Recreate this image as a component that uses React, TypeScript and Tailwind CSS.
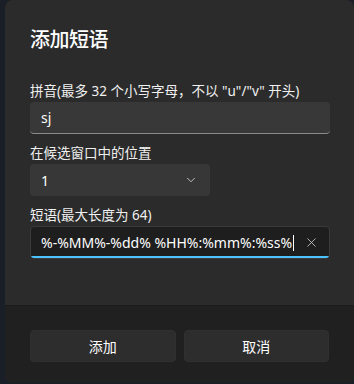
import { X, ChevronDown } from "lucide-react";

// Add-phrase dialog, dark theme. The dialog sits on a dark desk and
// bleeds past the right edge of the window by a couple of pixels.

const font = {
  fontFamily: '"Noto Sans", "Noto Sans CJK SC", sans-serif',
};

export default function App() {
  return (
    <div
      className="flex h-[384px] w-[354px] bg-[#1a1e26] pl-[5px] text-white"
      style={font}
    >
      <div className="flex h-[383px] flex-1 flex-col overflow-hidden rounded-[8px] bg-[#2b2b2b]">
        <div className="flex h-[305px] flex-col px-[25px]">
          <h1 className="mt-[26px] text-[20px] font-medium leading-[28px] tracking-tight">
            添加短语
          </h1>
          <label className="mt-[27px] text-[13.5px] leading-[20px] text-[#f0f0f0]">
            拼音(最多 32 个小写字母，不以 "u"/"v" 开头)
          </label>
          <div className="mt-[1px] flex h-[32px] w-[300px] items-center rounded-[4px] border-b border-[#8b8b8b] bg-[#383838] px-[11px] text-[14px]">
            sj
          </div>
          <label className="mt-[9px] text-[13.5px] leading-[20px] text-[#f0f0f0]">
            在候选窗口中的位置
          </label>
          <div className="mt-[1px] flex h-[32px] w-[180px] items-center justify-between rounded-[4px] bg-[#373737] pl-[11px] pr-[12px] text-[14px]">
            <span>1</span>
            <ChevronDown size={14} strokeWidth={1.5} className="text-[#d0d0d0]" />
          </div>
          <label className="mt-[9px] text-[13.5px] leading-[20px] text-[#f0f0f0]">
            短语(最大长度为 64)
          </label>
          <div className="relative mt-[1px] flex h-[33px] w-[300px] items-center overflow-hidden rounded-[4px] border border-[#3a3a3a] bg-[#1e1e1e] pl-[10px] pr-[10px] text-[14px]">
            <span className="whitespace-nowrap">%-%MM%-%dd% %HH%:%mm%:%ss%</span>
            <span className="ml-[1px] h-[16px] w-px bg-white" />
            <X size={15} strokeWidth={1.3} className="ml-auto text-[#cfcfcf]" />
            <div className="absolute inset-x-0 bottom-0 h-[2px] bg-[#4cc2ff]" />
          </div>
        </div>
        <div className="flex flex-1 gap-[8px] border-t border-[#1c1c1c] bg-[#202020] px-[25px] pt-[24px]">
          <button className="h-[32px] w-[146px] rounded-[4px] border border-[#303030] bg-[#2d2d2d] text-[14px]">
            添加
          </button>
          <button className="h-[32px] w-[146px] rounded-[4px] border border-[#303030] bg-[#2d2d2d] text-[14px]">
            取消
          </button>
        </div>
      </div>
    </div>
  );
}
